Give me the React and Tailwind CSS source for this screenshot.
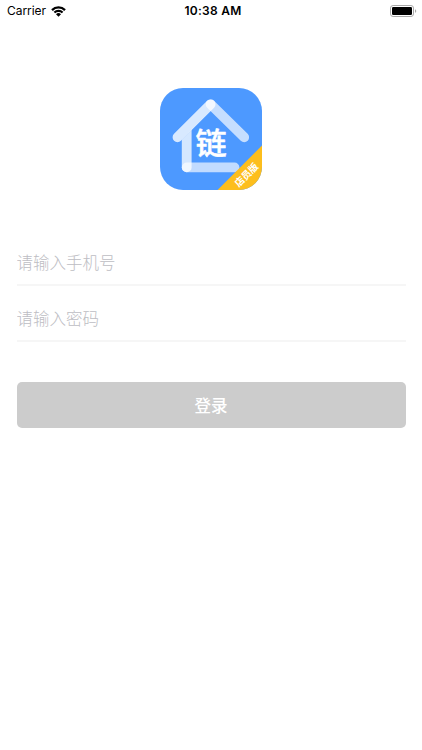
import React, { useState } from 'react';

const StatusBar = () => (
  <div className="grid h-[22px] grid-cols-3 items-center pl-[7px] pr-[5px] text-black">
    <div className="flex items-center gap-[5px]">
      <span className="text-[12px] leading-none tracking-[-0.05px]">Carrier</span>
      <svg className="h-[11px] w-[15px]" viewBox="0 0 15 11" fill="none" stroke="currentColor">
        <path d="M1 4.1a9.2 9.2 0 0 1 13 0" strokeWidth="2.3" />
        <path d="M3.4 6.6a5.8 5.8 0 0 1 8.2 0" strokeWidth="2.1" />
        <path d="M7.5 10.8L5 8.3a3.6 3.6 0 0 1 5 0z" fill="currentColor" stroke="none" />
      </svg>
    </div>
    <span className="pl-[2px] text-center text-[12px] leading-none font-semibold tracking-[0.28px]">
      10:38 AM
    </span>
    <div className="flex justify-end">
      <svg className="h-[12px] w-[27px]" viewBox="0 0 27 12">
        <rect x="0.5" y="0.5" width="23" height="11" rx="2.6" fill="none" stroke="#a8a8a8" />
        <rect x="2" y="2" width="20" height="8" rx="1.2" fill="#000" />
        <path d="M25 4.2c1.7.5 1.7 3.1 0 3.6z" fill="#a8a8a8" />
      </svg>
    </div>
  </div>
);

const Logo = () => (
  <svg className="h-[102px] w-[102px]" viewBox="0 0 102 102">
    <defs>
      <clipPath id="logo-shape">
        <rect width="102" height="102" rx="23" />
      </clipPath>
      {/* keeps the wall below the left roof beam */}
      <clipPath id="wall-shape">
        <path d="M20 53.4L34 39.4V90H20z" />
      </clipPath>
    </defs>
    <g clipPath="url(#logo-shape)">
      <rect width="102" height="102" fill="#4d99ff" />
      <g stroke="#fff" strokeWidth="9.8" strokeLinecap="round" fill="none">
        <path d="M17.5 49.3L50.6 16.3" strokeOpacity="0.78" />
        <path d="M50.6 16.3L84.2 49.3" strokeOpacity="0.68" />
        <path d="M26.7 40V79.4" strokeOpacity="0.76" clipPath="url(#wall-shape)" />
        <path d="M26.7 79.4H74.5" strokeOpacity="0.65" />
      </g>
      <text
        transform="translate(51.2 65.5) scale(1.04 1)"
        textAnchor="middle"
        fill="#fff"
        stroke="#fff"
        strokeWidth="0.5"
        strokeLinejoin="round"
        className="text-[30px] font-medium"
      >
        链
      </text>
      <path d="M102 57.4V102H57.6z" fill="#fdbe1c" />
      <text
        transform="translate(86.4 86.8) rotate(-45)"
        y="3.5"
        textAnchor="middle"
        fill="#fff"
        className="text-[9.6px] font-bold"
      >
        店员版
      </text>
    </g>
  </svg>
);

const Field = ({ type, placeholder, value, onChange }) => (
  <input
    type={type}
    placeholder={placeholder}
    value={value}
    onChange={(e) => onChange(e.target.value)}
    className="h-14 w-full border-b-2 border-[#f6f6f6] pt-[11px] text-[16.5px] font-light text-black outline-none placeholder:text-[#bdbdc3]"
  />
);

const App = () => {
  const [phone, setPhone] = useState('');
  const [password, setPassword] = useState('');
  const ready = phone && password;

  return (
    <div className="min-h-screen bg-white font-[Inter,'Noto_Sans_CJK_SC',sans-serif]">
      <StatusBar />

      <div className="flex justify-center pt-[66px]">
        <Logo />
      </div>

      <form className="mt-10 pr-[16.4px] pl-[16.6px]" onSubmit={(e) => e.preventDefault()}>
        <Field type="tel" placeholder="请输入手机号" value={phone} onChange={setPhone} />
        <Field type="password" placeholder="请输入密码" value={password} onChange={setPassword} />
        <button
          type="submit"
          disabled={!ready}
          className="mt-10 h-[46px] w-full rounded-[5px] bg-[#4d99ff] pt-[2px] text-[16.5px] font-medium text-white disabled:bg-[#cccccc]"
        >
          登录
        </button>
      </form>
    </div>
  );
};

export default App;
